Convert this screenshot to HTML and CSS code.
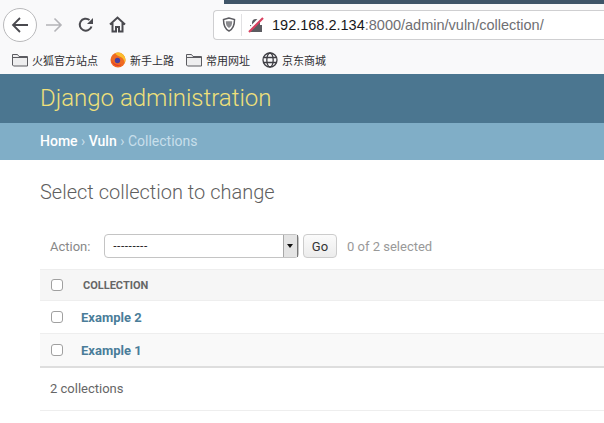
FILE: index.html
```html
<!DOCTYPE html>
<html lang="en">
<head>
    <meta charset="UTF-8">
    <title>Select collection to change</title>
    <link rel="stylesheet" href="styles.css">
</head>
<body>
    <div class="browser">
        <div class="window-strip"></div>
        <div class="toolbar">
            <div class="nav-buttons">
                <span class="back-btn">
                    <svg width="20" height="20" viewBox="0 0 20 20" fill="none" stroke="#4a4a4f" stroke-width="1.8"><path d="M18 10H3M10 3l-7 7 7 7"/></svg>
                </span>
                <svg class="forward-icon" width="18" height="18" viewBox="0 0 18 18" fill="none" stroke="#b4b4b8" stroke-width="1.6"><path d="M1 9h15M9.5 2.5L16 9l-6.5 6.5"/></svg>
                <svg class="reload-icon" width="16" height="16" viewBox="0 0 16 16" fill="none"><path d="M13.5 9.5A6 6 0 1 1 11.5 3" stroke="#4a4a4f" stroke-width="2"/><path d="M15 1v6H9z" fill="#4a4a4f"/></svg>
                <svg class="home-icon" width="17" height="17" viewBox="0 0 17 17" fill="none" stroke="#4a4a4f" stroke-width="2"><path d="M1 8.5L8.5 1.5 16 8.5M3.5 7v8.5H7V11h3v4.500h3.500V7"/></svg>
            </div>
            <div class="url-bar">
                <svg class="shield-icon" width="14" height="15" viewBox="0 0 14 15"><path d="M7 1L1.5 2.5c0 6 1 9.500 5.500 11.500 4.500-2 5.500-5.500 5.500-11.500z" fill="none" stroke="#5c5c61" stroke-width="1.5"/><path d="M3.8 4.300h6.400c0 3.500-.8 5.400-3.200 6.700-2.400-1.300-3.200-3.200-3.200-6.700z" fill="#8a8a8e"/></svg>
                <span class="url-divider"></span>
                <svg class="lock-icon" width="16" height="16" viewBox="0 0 16 16"><path d="M2 8h2V6a4 4 0 0 1 8 0v2h2v7H2z" fill="#5c5c61"/><path d="M0 13.500L13.500 0" stroke="#fff" stroke-width="3"/><path d="M1 15L15 1" stroke="#d9405f" stroke-width="2.2"/></svg>
                <span class="url-text"><span class="url-host">192.168.2.134</span>:8000/admin/vuln/collection/</span>
            </div>
        </div>
        <div class="bookmarks">
            <span class="bookmark">
                <svg width="16" height="14" viewBox="0 0 16 14" fill="#eeeeef" stroke="#5c5c61"><path d="M.5 12V1.500h5l1.500 2h8.500V13H1.500z"/><path d="M.5 4.500h15" fill="none"/></svg>
                火狐官方站点
            </span>
            <span class="bookmark">
                <svg width="16" height="16" viewBox="0 0 16 16"><circle cx="8" cy="8" r="7.5" fill="#ee6a22"/><path d="M5 1.200a7.500 7.500 0 0 1 10.500 6.800c0 1-.3 2.200-.8 3.200-.2-2.800-1.500-5-4-6.200-2-1-4.500-1.800-5.700-3.800z" fill="#fbbc2c"/><circle cx="7.500" cy="8.500" r="2.700" fill="#4a3f9e"/><path d="M1.500 7c1 4.500 5 7 10 5.500-3 3-9.500 1.500-10-5.500z" fill="#e2342c"/></svg>
                新手上路
            </span>
            <span class="bookmark">
                <svg width="16" height="14" viewBox="0 0 16 14" fill="#eeeeef" stroke="#5c5c61"><path d="M.5 12V1.500h5l1.500 2h8.500V13H1.500z"/><path d="M.5 4.500h15" fill="none"/></svg>
                常用网址
            </span>
            <span class="bookmark">
                <svg width="16" height="16" viewBox="0 0 16 16" fill="none" stroke="#3f3f44" stroke-width="1.3"><circle cx="8" cy="8" r="7"/><ellipse cx="8" cy="8" rx="3.2" ry="7"/><path d="M1.500 5.500h13M1.500 10.500h13"/></svg>
                京东商城
            </span>
        </div>
    </div>

    <div class="header">Django administration</div>
    <div class="breadcrumbs">
        <a href="#">Home</a><span class="sep"> › </span><a href="#">Vuln</a><span class="sep"> › </span>Collections
    </div>

    <div class="content">
        <h1>Select collection to change</h1>
        <div class="actions">
            <label class="action-label">Action:</label>
            <div class="fake-select">
                <span class="select-value">---------</span>
                <span class="select-arrow"></span>
            </div>
            <button class="go-btn">Go</button>
            <span class="counter">0 of 2 selected</span>
        </div>
        <table class="results">
            <tr class="head-row">
                <th class="check-cell"><span class="checkbox"></span></th>
                <th>COLLECTION</th>
            </tr>
            <tr>
                <td class="check-cell"><span class="checkbox"></span></td>
                <td><a href="#">Example 2</a></td>
            </tr>
            <tr class="alt-row">
                <td class="check-cell"><span class="checkbox"></span></td>
                <td><a href="#">Example 1</a></td>
            </tr>
        </table>
        <p class="paginator">2 collections</p>
    </div>
</body>
</html>
```

FILE: styles.css
```css
html, body {
    margin: 0;
    padding: 0;
    height: 423px;
    overflow: hidden;
    background-color: #fff;
    font-family: Roboto, "Noto Sans CJK SC", sans-serif;
}

.browser {
    height: 74px;
    background-color: #f9f9fa;
    overflow: hidden;
}

.window-strip {
    height: 4px;
    margin-left: 224px;
    background-color: #3f5568;
}

.toolbar {
    display: flex;
    align-items: center;
    height: 41px;
    padding-left: 3px;
}

.nav-buttons {
    display: flex;
    align-items: center;
    width: 210px;
}

.back-btn {
    display: flex;
    align-items: center;
    justify-content: center;
    width: 32px;
    height: 32px;
    border: 1px solid #b9b9bb;
    border-radius: 50%;
    background-color: #fff;
}

.forward-icon {
    margin-left: 8px;
}

.reload-icon {
    margin-left: 15px;
}

.home-icon {
    margin-left: 15px;
}

.url-bar {
    display: flex;
    align-items: center;
    flex: 1;
    height: 28px;
    border: 1px solid #cfcfd1;
    border-right: none;
    border-radius: 4px 0 0 4px;
    background-color: #fff;
}

.shield-icon {
    margin-left: 8px;
}

.url-divider {
    width: 1px;
    height: 22px;
    margin-left: 5px;
    background-color: #e1e1e3;
}

.lock-icon {
    margin-left: 6px;
}

.url-text {
    margin-left: 8px;
    font-family: "Liberation Sans", sans-serif;
    font-size: 14.5px;
    color: #6f6f73;
    white-space: nowrap;
}

.url-host {
    color: #17171a;
}

.bookmarks {
    display: flex;
    align-items: center;
    gap: 12px;
    height: 29px;
    padding-left: 12px;
}

.bookmark {
    display: flex;
    align-items: center;
    gap: 4px;
    font-size: 11px;
    color: #2f2f33;
    white-space: nowrap;
}

.header {
    height: 49px;
    padding-left: 40px;
    background-color: #4b7690;
    color: #f0e07a;
    font-size: 24px;
    font-weight: 300;
    line-height: 49px;
}

.breadcrumbs {
    height: 37px;
    padding-left: 40px;
    background-color: #80aec7;
    color: #c8dfeb;
    font-size: 14px;
    line-height: 37px;
}

.breadcrumbs a {
    color: #fff;
    font-weight: 500;
    text-decoration: none;
}

.sep {
    color: #c8dfeb;
}

.content {
    padding: 20px 0 0 40px;
}

h1 {
    margin: 0 0 30px;
    color: #5f5f5f;
    font-size: 20px;
    font-weight: 300;
    line-height: 24px;
}

.actions {
    display: flex;
    align-items: center;
    height: 24px;
    padding: 0 0 11px 10px;
    font-size: 13px;
    color: #999;
}

.action-label {
    width: 54px;
    color: #888;
}

.fake-select {
    display: flex;
    justify-content: space-between;
    box-sizing: border-box;
    width: 195px;
    height: 24px;
    border: 1px solid #c4c4c4;
    border-radius: 4px;
    background-color: #fff;
}

.select-value {
    padding-left: 8px;
    color: #111;
    font-family: "Liberation Sans", sans-serif;
    font-size: 11.5px;
    line-height: 20px;
}

.select-arrow {
    position: relative;
    width: 13px;
    border-left: 1px solid #a8a8a8;
    border-right: 1px solid #777;
    background-color: #e4e4e4;
}

.select-arrow::after {
    content: "";
    position: absolute;
    top: 9px;
    left: 3px;
    border-top: 4px solid #111;
    border-left: 3.5px solid transparent;
    border-right: 3.5px solid transparent;
}

.go-btn {
    box-sizing: border-box;
    width: 34px;
    height: 24px;
    margin-left: 4px;
    padding: 0;
    border: 1px solid #ccc;
    border-radius: 4px;
    background: linear-gradient(#fbfbfb, #ececec);
    color: #333;
    font-family: Roboto, sans-serif;
    font-size: 13px;
}

.counter {
    margin-left: 10px;
}

.results {
    width: 564px;
    border-collapse: collapse;
    border-bottom: 2px solid #dedede;
}

.results th {
    height: 30px;
    padding: 0 0 0 3px;
    border-top: 1px solid #eee;
    border-bottom: 1px solid #eee;
    background-color: #f6f6f6;
    color: #666;
    font-size: 11px;
    font-weight: 700;
    text-align: left;
}

.results td {
    height: 32px;
    padding: 0 0 0 1px;
    border-bottom: 1px solid #eee;
    font-size: 13px;
    font-weight: 700;
}

.results .check-cell {
    width: 40px;
    padding: 0 0 0 11px;
    box-sizing: border-box;
}

.alt-row td {
    background-color: #f9f9f9;
}

.results a {
    color: #4a7d99;
    text-decoration: none;
}

.checkbox {
    display: block;
    box-sizing: border-box;
    width: 12px;
    height: 12px;
    border: 1px solid #a0a0a0;
    border-radius: 3px;
    background-color: #fff;
}

.paginator {
    box-sizing: border-box;
    width: 564px;
    height: 43px;
    margin: 0;
    padding-left: 10px;
    border-bottom: 1px solid #eee;
    color: #666;
    font-size: 13px;
    line-height: 42px;
}
```
